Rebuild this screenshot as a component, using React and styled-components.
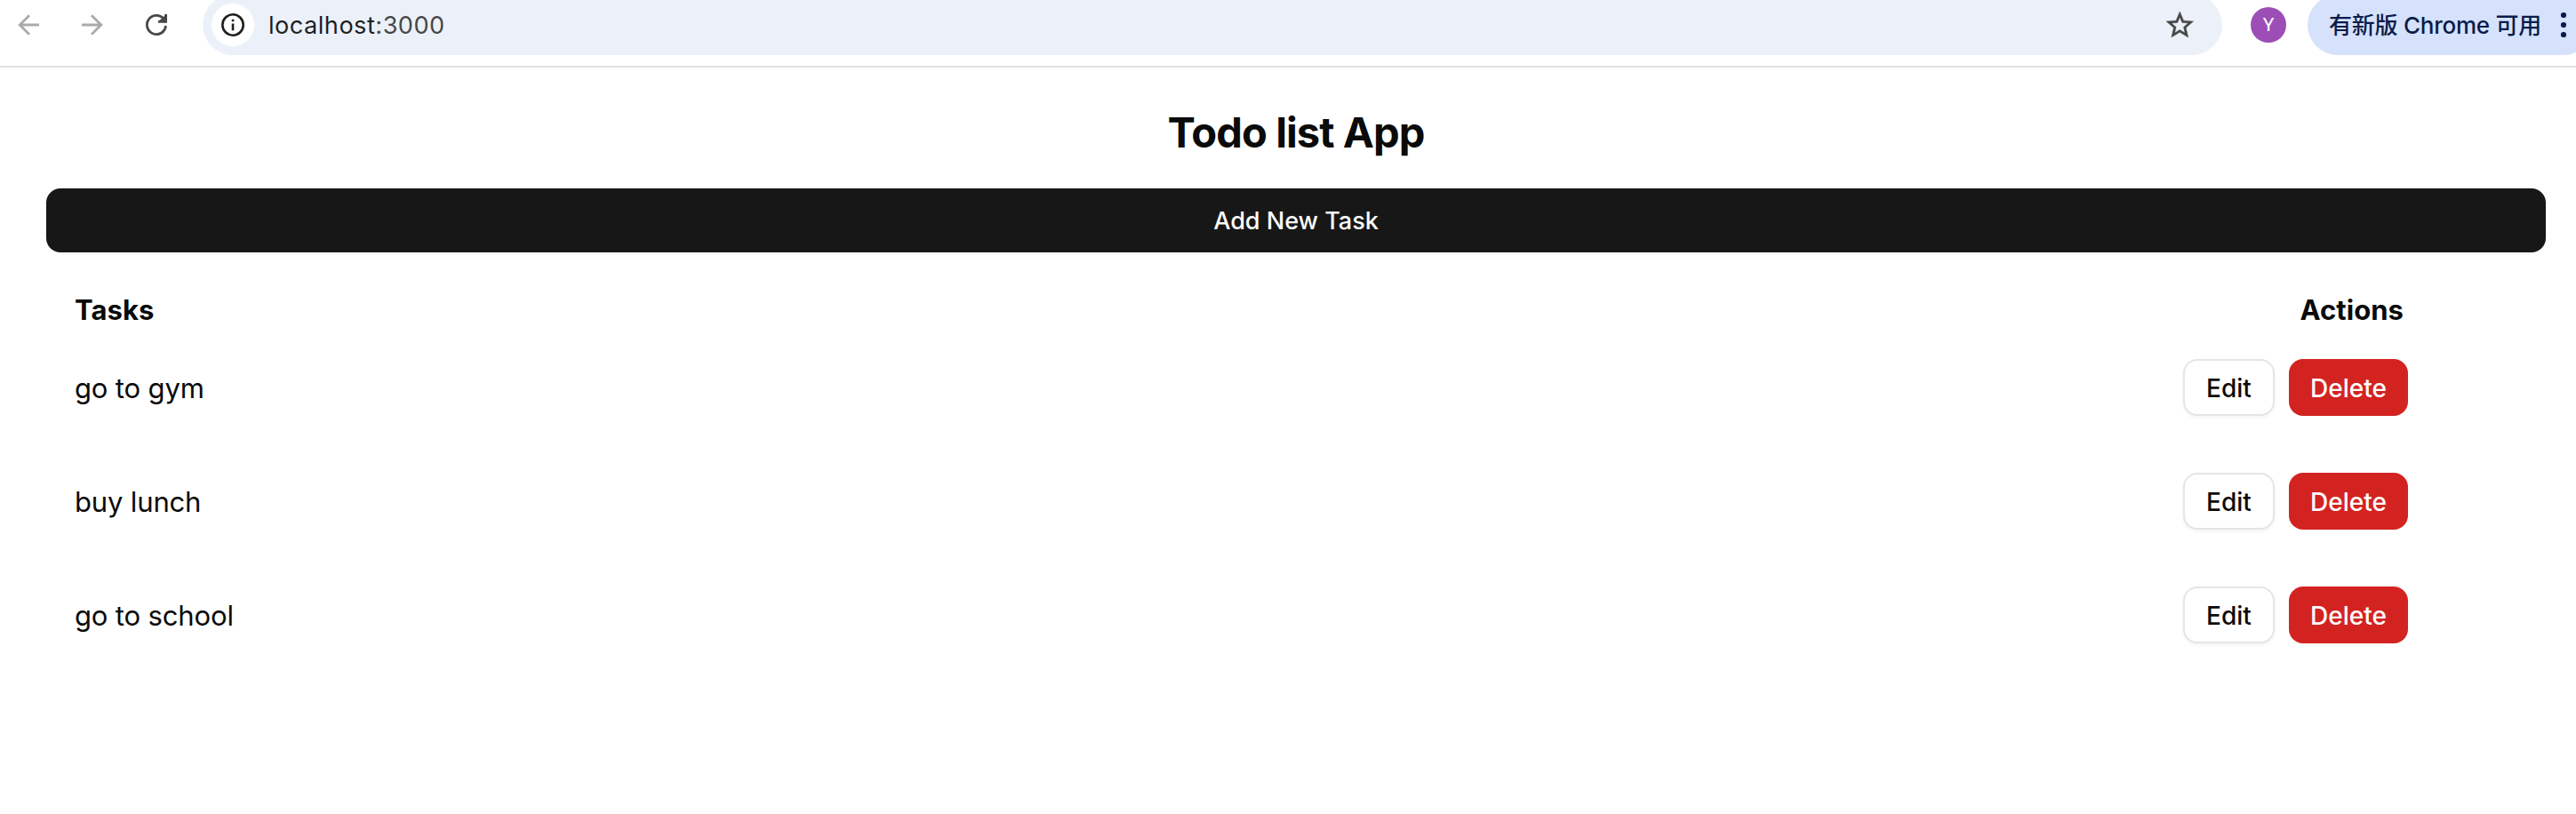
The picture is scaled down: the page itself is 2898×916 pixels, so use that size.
import React from 'react';
import styled, { createGlobalStyle, css } from 'styled-components';

const GlobalStyle = createGlobalStyle`
  *, *::before, *::after { box-sizing: border-box; }
  body {
    margin: 0;
    background: #fff;
    color: #0a0a0a;
    font-family: Inter, "Noto Sans CJK SC", sans-serif;
    overflow: hidden;
  }
`;

const Toolbar = styled.header`
  display: flex;
  align-items: flex-end;
  height: 76px;
  padding-bottom: 12px;
  border-bottom: 2px solid #e0e0e0;
  overflow: hidden;
`;

const NavButtons = styled.nav`
  display: flex;
  align-items: center;
  gap: 40px;
  width: 228px;
  height: 68px;
  padding-left: 16px;
  flex: none;
`;

const NavIcon = styled.svg`
  display: block;
  width: 32px;
  height: 32px;
  flex: none;
  fill: none;
  stroke: ${({ $active }) => ($active ? '#474747' : '#ababab')};
  stroke-width: 2.8;
`;

const AddressBar = styled.div`
  display: flex;
  align-items: center;
  width: 2272px;
  height: 68px;
  padding: 0 29.5px 0 10px;
  border-radius: 34px;
  background: #ecf1f9;
  flex: none;
`;

const SiteInfo = styled.span`
  display: grid;
  place-items: center;
  width: 48px;
  height: 48px;
  border-radius: 50%;
  background: #fff;
`;

const Url = styled.span`
  flex: 1;
  margin-left: 16px;
  padding-top: 1px;
  font-size: 27px;
  line-height: 34px;
  letter-spacing: 0.55px;
  color: #1f1f1f;
`;

const Port = styled.span`
  color: #474747;
`;

const Avatar = styled.span`
  display: grid;
  place-items: center;
  width: 40px;
  height: 40px;
  margin: 0 24px 14px 32px;
  border-radius: 50%;
  background: #9c4eb6;
  color: #fff;
  font: 400 21px/40px Roboto, sans-serif;
  flex: none;
`;

const UpdateChip = styled.div`
  display: flex;
  align-items: center;
  width: 322px;
  height: 68px;
  padding-left: 24px;
  border-radius: 34px;
  background: #d6e2fb;
  color: #0a1c4a;
  font-size: 26px;
  font-weight: 500;
  line-height: 34px;
  letter-spacing: -0.25px;
  white-space: nowrap;
  flex: none;
`;

const ChipLabel = styled.span`
  width: 257px;
  padding-top: 1px;
`;

const Page = styled.main`
  display: flex;
  flex-direction: column;
  padding: 43px 34px 0 52px;
`;

const Title = styled.h1`
  margin: 0 0 33px;
  font-size: 47px;
  font-weight: 700;
  line-height: 60px;
  letter-spacing: -0.9px;
  text-align: center;
`;

const Button = styled.button`
  display: inline-flex;
  align-items: center;
  justify-content: center;
  height: 64px;
  padding: 1px 0 0;
  border: 0;
  border-radius: 16px;
  font: 500 28px/40px Inter, sans-serif;
  ${({ $kind }) =>
    $kind === 'primary' &&
    css`
      height: 72px;
      font-size: 27px;
      background: #171717;
      color: #fafafa;
    `}
  ${({ $kind }) =>
    $kind === 'outline' &&
    css`
      width: 103px;
      border: 2px solid #e5e5e5;
      background: #fff;
      color: #0a0a0a;
      box-shadow: 0 2px 4px rgba(0, 0, 0, 0.05);
    `}
  ${({ $kind }) =>
    $kind === 'danger' &&
    css`
      width: 134px;
      background: #d32321;
      color: #fff;
    `}
`;

const TaskTable = styled.section`
  display: flex;
  flex-direction: column;
  padding: 24px 155px 0 32px;
  font-size: 31px;
  line-height: 48px;
  letter-spacing: -0.15px;
`;

const Row = styled.div`
  display: flex;
  align-items: center;
  justify-content: space-between;
  height: 128px;
`;

const HeaderRow = styled(Row)`
  height: 64px;
  padding: 18px 5px 0 0;
  font-weight: 700;
  letter-spacing: 0.05px;
`;

const TaskName = styled.span`
  padding-top: 1px;
`;

const Actions = styled.div`
  display: flex;
  gap: 16px;
`;

const tasks = ['go to gym', 'buy lunch', 'go to school'];

export default function App() {
  return (
    <>
      <GlobalStyle />
      <Toolbar>
        <NavButtons>
          <NavIcon viewBox="0 0 32 32">
            <path d="M28 16H6.5M17 5.2 6.2 16 17 26.8" />
          </NavIcon>
          <NavIcon viewBox="0 0 32 32">
            <path d="M4 16h21.5M15 5.2 25.8 16 15 26.8" />
          </NavIcon>
          <NavIcon viewBox="0 0 32 32" $active>
            <path d="M26.5 17A10.6 10.6 0 1 1 23.9 9" />
            <path d="M18 12.3h8.6V4" />
            <path d="M21 11.5 26 7v5z" />
          </NavIcon>
        </NavButtons>
        <AddressBar>
          <SiteInfo>
            <svg width="28" height="28" viewBox="0 0 28 28" fill="none" stroke="#1f1f1f">
              <circle cx="14" cy="14" r="11.7" strokeWidth="2.6" />
              <path d="M14 12.6v7.6M14 7.7v2.6" strokeWidth="2.6" />
            </svg>
          </SiteInfo>
          <Url>
            localhost<Port>:3000</Port>
          </Url>
          <svg width="36.6" height="36.6" viewBox="0 0 24 24" fill="#474747" stroke="#474747" strokeWidth="0.3">
            <path d="M22 9.24l-7.19-.62L12 2 9.19 8.63 2 9.24l5.46 4.73L5.82 21 12 17.27 18.18 21l-1.63-7.03L22 9.24zM12 15.4l-3.76 2.27 1-4.28-3.32-2.88 4.38-.38L12 6.1l1.71 4.04 4.38.38-3.32 2.88 1 4.28L12 15.4z" />
          </svg>
        </AddressBar>
        <Avatar>Y</Avatar>
        <UpdateChip>
          <ChipLabel>有新版 Chrome 可用</ChipLabel>
          <svg width="14" height="32" viewBox="0 0 14 32" fill="#0a1c4a">
            <circle cx="7" cy="5" r="3.1" />
            <circle cx="7" cy="16" r="3.1" />
            <circle cx="7" cy="27" r="3.1" />
          </svg>
        </UpdateChip>
      </Toolbar>
      <Page>
        <Title>Todo list App</Title>
        <Button $kind="primary">Add New Task</Button>
        <TaskTable>
          <HeaderRow>
            <span>Tasks</span>
            <span>Actions</span>
          </HeaderRow>
          {tasks.map((task) => (
            <Row key={task}>
              <TaskName>{task}</TaskName>
              <Actions>
                <Button $kind="outline">Edit</Button>
                <Button $kind="danger">Delete</Button>
              </Actions>
            </Row>
          ))}
        </TaskTable>
      </Page>
    </>
  );
}
